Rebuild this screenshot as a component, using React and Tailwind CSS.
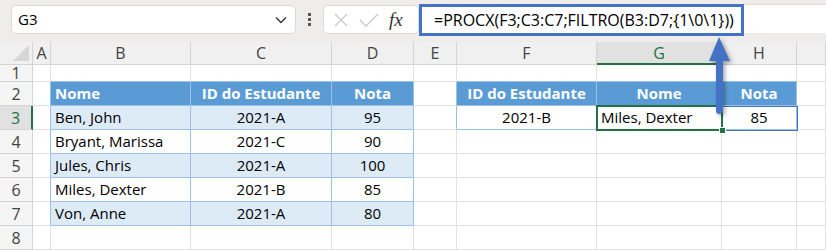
import React from "react";

const colW = [33, 18, 140, 141, 82, 43, 140, 125, 75, 29];
const rowH = [23, 17, 24, 24, 24, 24, 24, 24, 24];
const letters = ["", "A", "B", "C", "D", "E", "F", "G", "H", ""];

const data = {
  2: { 2: "Nome", 3: "ID do Estudante", 4: "Nota", 6: "ID do Estudante", 7: "Nome", 8: "Nota" },
  3: { 2: "Ben, John", 3: "2021-A", 4: "95", 6: "2021-B", 7: "Miles, Dexter", 8: "85" },
  4: { 2: "Bryant, Marissa", 3: "2021-C", 4: "90" },
  5: { 2: "Jules, Chris", 3: "2021-A", 4: "100" },
  6: { 2: "Miles, Dexter", 3: "2021-B", 4: "85" },
  7: { 2: "Von, Anne", 3: "2021-A", 4: "80" },
};

function inTable(r, c) {
  return (r >= 2 && r <= 7 && c >= 2 && c <= 4) || (r >= 2 && r <= 3 && c >= 6 && c <= 8);
}

function Cell({ r, c }) {
  const t = inTable(r, c);
  const header = t && r === 2;
  const band = t && r >= 3 && c <= 4 && r % 2 === 1;
  const rightBlue = t || inTable(r, c + 1);
  const bottomBlue = t || inTable(r + 1, c);
  const text = data[r] && data[r][c];
  const left = c === 2 || (c === 7 && r === 3);
  const align = left ? "justify-start pl-[4px]" : "justify-center";
  let bg = "bg-white";
  if (header) bg = "bg-[#5b9bd5]";
  else if (band) bg = "bg-[#ddebf7]";
  const rb = rightBlue ? "border-r-[#9bc2e6]" : "border-r-[#e1e1e1]";
  const bb = bottomBlue ? "border-b-[#9bc2e6]" : "border-b-[#e1e1e1]";
  return (
    <div
      className={`flex items-center ${align} ${bg} border-r border-b ${rb} ${bb} overflow-hidden whitespace-nowrap text-[15px] ${
        header ? "font-bold text-white" : "text-black"
      }`}
    >
      {text}
    </div>
  );
}

export default function App() {
  const rows = [1, 2, 3, 4, 5, 6, 7, 8];
  return (
    <div
      className="relative w-[826px] h-[250px] overflow-hidden bg-[#efedec]"
      style={{ fontFamily: '"Open Sans", "Noto Sans", sans-serif' }}
    >
      {/* toolbar */}
      <div className="flex items-start h-[42px] pt-[4px]">
        <div className="ml-[11px] w-[285px] h-[29px] mt-[1px] bg-white rounded-[5px] border border-[#dcdada] flex items-center justify-between pl-[6px] pr-[8px]">
          <span className="text-[15px] text-black">G3</span>
          <svg width="12" height="8" viewBox="0 0 12 8">
            <path d="M1 1.5 L6 6.5 L11 1.5" fill="none" stroke="#333" strokeWidth="1.3" />
          </svg>
        </div>
        <div className="w-[27px] h-[30px] flex flex-col items-center justify-center gap-[2px]">
          <div className="w-[3px] h-[3px] bg-[#555]" />
          <div className="w-[3px] h-[3px] bg-[#555]" />
          <div className="w-[3px] h-[3px] bg-[#555]" />
        </div>
        <div className="w-[96px] h-[29px] mt-[1px] bg-white rounded-[5px] border border-[#dcdada] flex items-center pl-[6px]">
          <svg width="16" height="16" viewBox="0 0 16 16" className="ml-[3px]">
            <path d="M2 2 L14 14 M14 2 L2 14" stroke="#c8c8c8" strokeWidth="1.3" />
          </svg>
          <svg width="20" height="16" viewBox="0 0 20 16" className="ml-[10px]">
            <path d="M1 8 L7 14 L19 2" fill="none" stroke="#c8c8c8" strokeWidth="1.3" />
          </svg>
          <span
            className="ml-[10px] text-[19px] italic text-[#333] leading-none"
            style={{ fontFamily: '"Liberation Serif", serif' }}
          >
            fx
          </span>
        </div>
        <div className="ml-[1px] flex-1 h-[29px] bg-white border-t border-[#dddada]" />
      </div>

      {/* grid */}
      <div
        className="grid"
        style={{
          gridTemplateColumns: colW.map((w) => w + "px").join(" "),
          gridTemplateRows: rowH.map((h) => h + "px").join(" "),
        }}
      >
        {letters.map((l, c) =>
          c === 0 ? (
            <div key="corner" className="relative bg-[#f0f0f0] border-r border-b border-[#d4d4d4]">
              <svg className="absolute right-[3px] bottom-[3px]" width="16" height="16" viewBox="0 0 16 16">
                <path d="M16 0 L16 16 L0 16 Z" fill="#d6d6d6" />
              </svg>
            </div>
          ) : (
            <div
              key={"h" + c}
              className={`flex items-center justify-center text-[16px] border-r ${
                c === 7
                  ? "bg-[#e1e1e1] text-[#217346] border-b-2 border-b-[#217346] border-r-[#d4d4d4]"
                  : "bg-[#f0f0f0] text-[#444] border-b border-[#d4d4d4]"
              }`}
            >
              {l}
            </div>
          )
        )}
        {rows.map((r) => (
          <React.Fragment key={r}>
            <div
              className={`flex items-center justify-center text-[16px] border-b ${
                r === 3
                  ? "bg-[#e1e1e1] text-[#217346] border-r-2 border-r-[#217346] border-b-[#d4d4d4]"
                  : "bg-[#f5f5f5] text-[#444] border-r border-[#d4d4d4]"
              }`}
            >
              {r}
            </div>
            {colW.slice(1).map((_, i) => (
              <Cell key={i} r={r} c={i + 1} />
            ))}
          </React.Fragment>
        ))}
      </div>

      {/* H3 border */}
      <div className="absolute left-[722px] top-[106px] w-[76px] h-[25px] border border-[#4472c4] pointer-events-none" />

      {/* selection G3 */}
      <div className="absolute left-[596px] top-[105px] w-[127px] h-[26px] border-2 border-[#217346] pointer-events-none" />
      <div className="absolute left-[719px] top-[127px] w-[7px] h-[7px] bg-[#217346] border border-white" />

      {/* formula box */}
      <div className="absolute left-[419px] top-[4px] w-[325px] h-[32px] border-[3px] border-[#4472c4] bg-white flex items-center pl-[12px]">
        <span className="text-[16px] text-black whitespace-nowrap">=PROCX(F3;C3:C7;FILTRO(B3:D7;{"{1\\0\\1}"}))</span>
      </div>

      {/* arrow */}
      <svg
        className="absolute left-[705px] top-[34px]"
        width="30"
        height="85"
        viewBox="0 0 30 85"
        style={{ filter: "drop-shadow(2px 2px 2px rgba(0,0,0,0.35))" }}
      >
        <path d="M14 3 L25 27 L18 27 L18 77 Q18 80 14.5 80 Q11 80 11 77 L11 27 L4 27 Z" fill="#4472c4" />
      </svg>
    </div>
  );
}
